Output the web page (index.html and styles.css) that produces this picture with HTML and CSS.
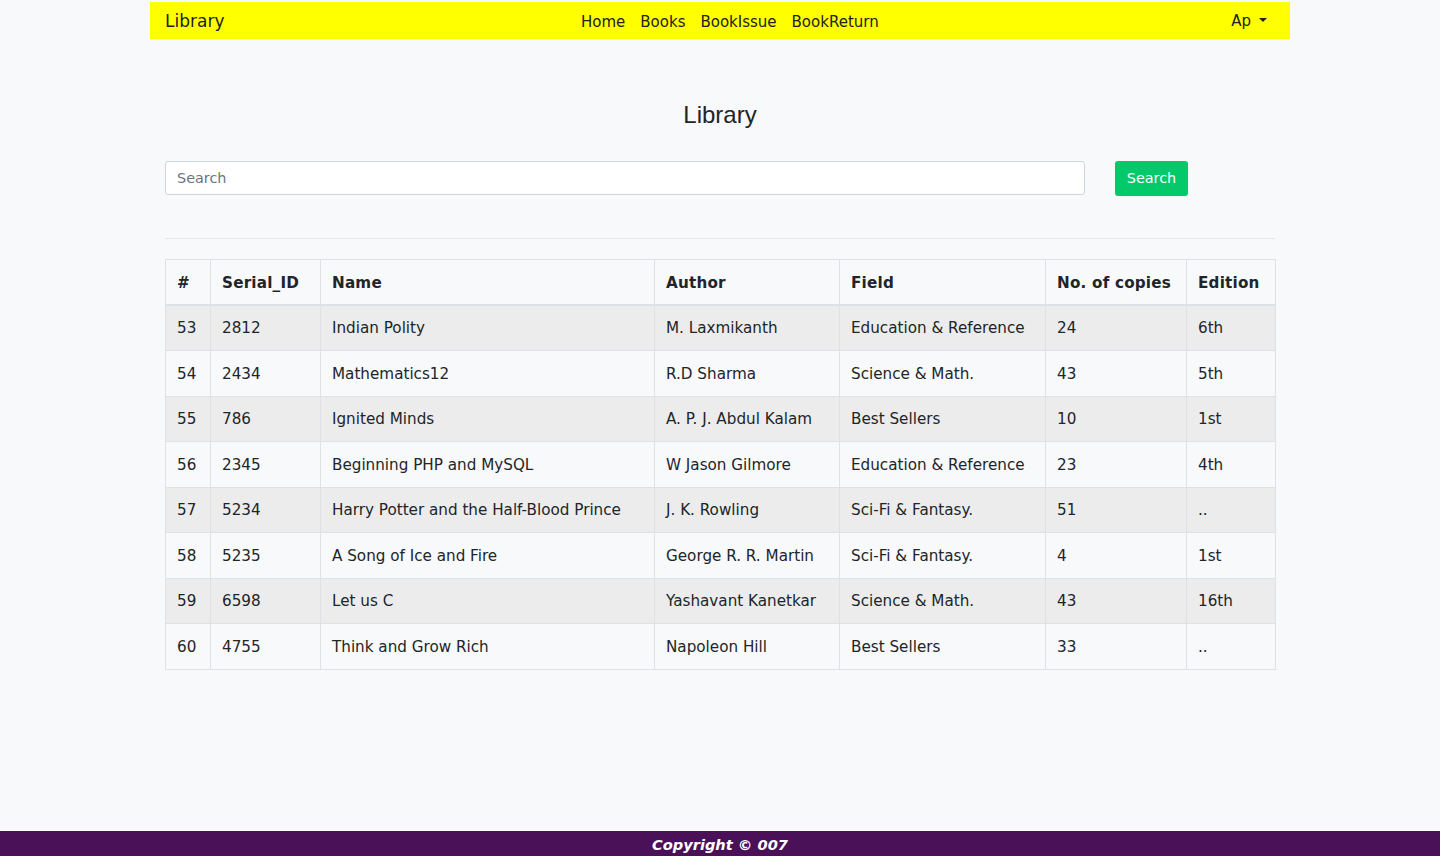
FILE: index.html
```html
<!DOCTYPE html>
<html>
<head>
<meta charset="utf-8">
<title>Library</title>
<link rel="stylesheet" href="styles.css">
</head>
<body>
<div class="page">
  <nav class="navbar">
    <a class="brand" href="#">Library</a>
    <ul class="links">
      <li><a href="#">Home</a></li>
      <li><a href="#">Books</a></li>
      <li><a href="#">BookIssue</a></li>
      <li><a href="#">BookReturn</a></li>
    </ul>
    <a class="user" href="#">Ap <span class="caret"></span></a>
  </nav>
  <main class="main">
    <h1 class="title">Library</h1>
    <form class="search">
      <input class="search-input" type="text" placeholder="Search">
      <button class="search-btn" type="button">Search</button>
    </form>
    <hr class="rule">
    <table class="books">
      <colgroup>
        <col style="width:45px"><col style="width:110px"><col style="width:334px"><col style="width:185px"><col style="width:206px"><col style="width:141px"><col style="width:89px">
      </colgroup>
      <thead>
        <tr><th>#</th><th>Serial_ID</th><th>Name</th><th>Author</th><th>Field</th><th>No. of copies</th><th>Edition</th></tr>
      </thead>
      <tbody>
        <tr><td>53</td><td>2812</td><td>Indian Polity</td><td>M. Laxmikanth</td><td>Education &amp; Reference</td><td>24</td><td>6th</td></tr>
        <tr><td>54</td><td>2434</td><td>Mathematics12</td><td>R.D Sharma</td><td>Science &amp; Math.</td><td>43</td><td>5th</td></tr>
        <tr><td>55</td><td>786</td><td>Ignited Minds</td><td>A. P. J. Abdul Kalam</td><td>Best Sellers</td><td>10</td><td>1st</td></tr>
        <tr><td>56</td><td>2345</td><td>Beginning PHP and MySQL</td><td>W Jason Gilmore</td><td>Education &amp; Reference</td><td>23</td><td>4th</td></tr>
        <tr><td>57</td><td>5234</td><td>Harry Potter and the Half-Blood Prince</td><td>J. K. Rowling</td><td>Sci-Fi &amp; Fantasy.</td><td>51</td><td>..</td></tr>
        <tr><td>58</td><td>5235</td><td>A Song of Ice and Fire</td><td>George R. R. Martin</td><td>Sci-Fi &amp; Fantasy.</td><td>4</td><td>1st</td></tr>
        <tr><td>59</td><td>6598</td><td>Let us C</td><td>Yashavant Kanetkar</td><td>Science &amp; Math.</td><td>43</td><td>16th</td></tr>
        <tr><td>60</td><td>4755</td><td>Think and Grow Rich</td><td>Napoleon Hill</td><td>Best Sellers</td><td>33</td><td>..</td></tr>
      </tbody>
    </table>
  </main>
  <footer class="footer">Copyright © 007</footer>
</div>
</body>
</html>
```
FILE: styles.css
```css
* { box-sizing: border-box; }
html, body { margin: 0; padding: 0; }
body {
  background: #f8f9fa;
  font-family: "DejaVu Sans", Verdana, sans-serif;
  color: #212529;
}
.page {
  min-height: 856px;
  display: flex;
  flex-direction: column;
}
.navbar {
  width: 1140px;
  margin: 2px auto 0;
  height: 37px;
  background: #ffff00;
  display: flex;
  align-items: center;
  padding: 0 15px;
  position: relative;
}
.brand {
  font-size: 17px;
  color: #212121;
  text-decoration: none;
  line-height: 1;
  margin-top: 1px;
}
.links {
  list-style: none;
  margin: 0;
  padding: 0;
  display: flex;
  gap: 15px;
  position: absolute;
  left: 431px;
  top: 10px;
}
.links a {
  font-size: 15px;
  color: #212121;
  text-decoration: none;
}
.user {
  margin-left: auto;
  margin-right: 8px;
  font-size: 15px;
  color: #212121;
  text-decoration: none;
  display: flex;
  align-items: center;
  gap: 8px;
}
.caret {
  width: 0; height: 0;
  border-left: 4px solid transparent;
  border-right: 4px solid transparent;
  border-top: 4px solid #212121;
  margin-top: -2px;
}
.main {
  width: 1140px;
  margin: 0 auto;
  padding: 0 15px;
  flex: 1;
}
.title {
  font-family: "Liberation Sans", Arial, sans-serif;
  font-weight: normal;
  font-size: 24px;
  text-align: center;
  margin: 62px 0 31px;
  line-height: 1.2;
  color: #212529;
}
.search {
  display: flex;
  align-items: center;
  gap: 30px;
  margin: 0;
}
.search-input {
  width: 920px;
  height: 34px;
  border: 1px solid #ced4da;
  border-radius: 3px;
  background: #fff;
  padding: 0 11px;
  font-family: "DejaVu Sans", Verdana, sans-serif;
  font-size: 14.4px;
  color: #495057;
}
.search-input::placeholder { color: #6c757d; }
.search-btn {
  width: 73px;
  height: 35px;
  background: #03c96b;
  border: none;
  border-radius: 3px;
  color: #fff;
  font-family: "DejaVu Sans", Verdana, sans-serif;
  font-size: 14.4px;
  padding: 0;
}
.rule {
  border: 0;
  border-top: 1px solid #e5e7ea;
  margin: 42px 0 20px;
}
.books {
  width: 1110px;
  border-collapse: collapse;
  table-layout: fixed;
  font-size: 15.2px;
}
.books th, .books td {
  border: 1px solid #dee2e6;
  padding: 12.5px 11px 11.5px;
  text-align: left;
  line-height: 20.5px;
  white-space: nowrap;
}
.books th {
  font-weight: bold;
  letter-spacing: 0.2px;
  border-bottom: 2px solid #dee2e6;
  padding-top: 13px;
  padding-bottom: 10.5px;
}
.books tbody tr:nth-child(odd) { background: #ececed; }
.footer {
  height: 25px;
  background: #4a1058;
  color: #fff;
  text-align: center;
  font-style: italic;
  font-weight: bold;
  font-size: 14.6px;
  line-height: 28px;
}
```
